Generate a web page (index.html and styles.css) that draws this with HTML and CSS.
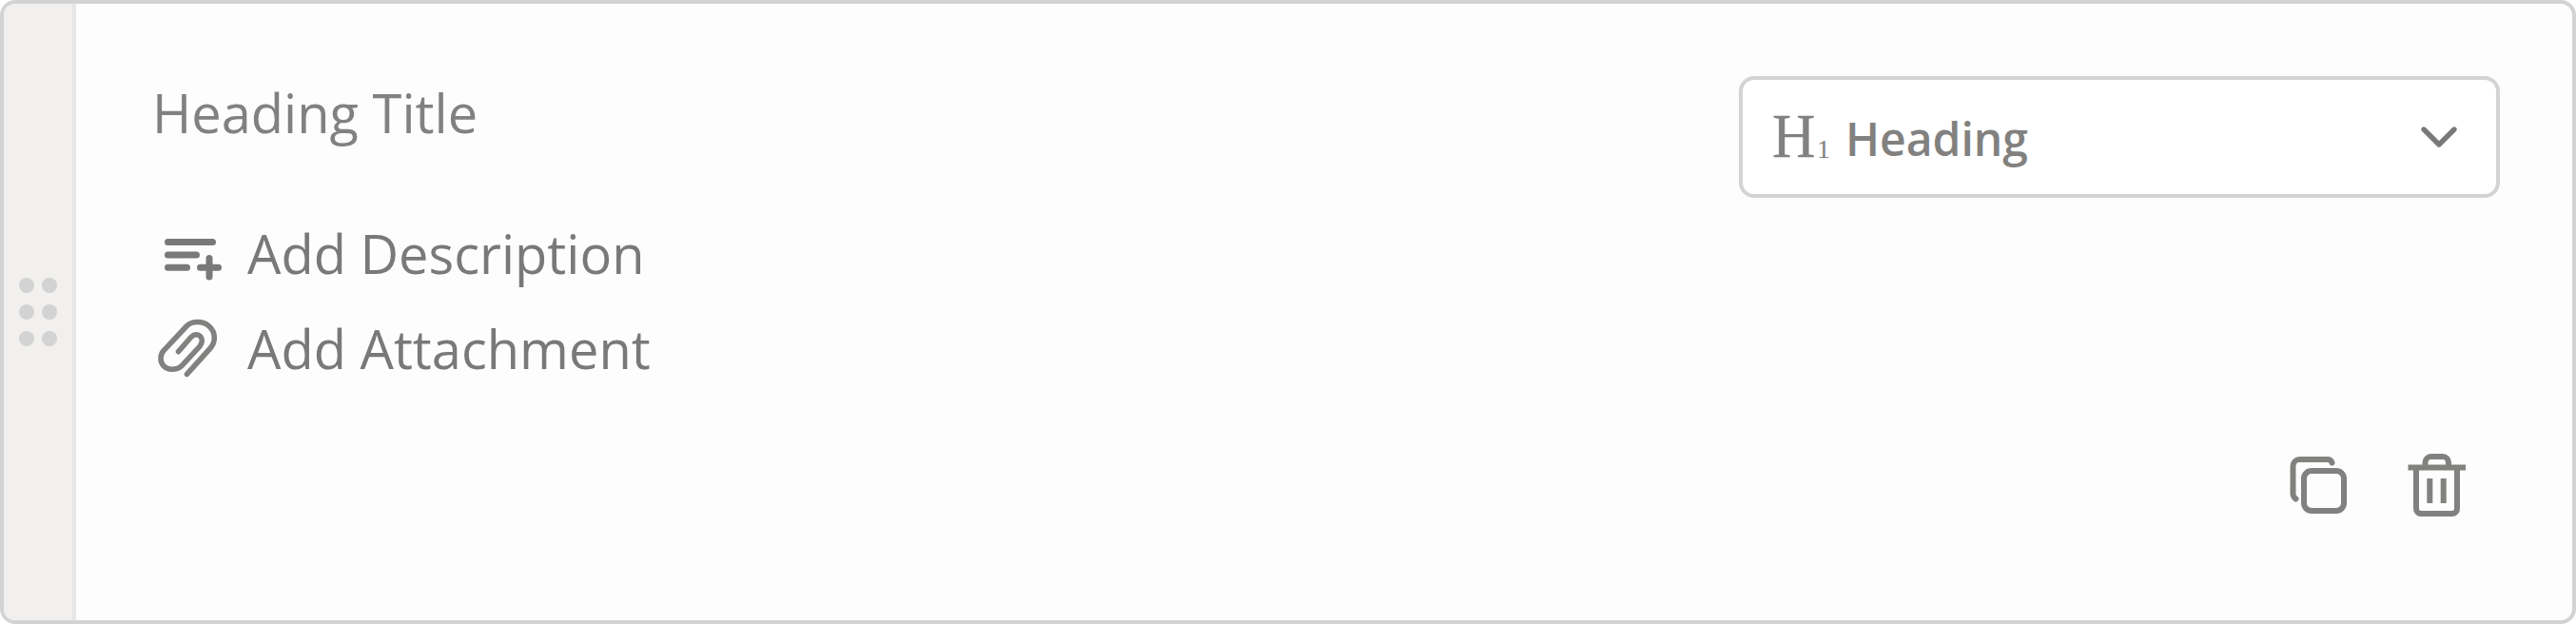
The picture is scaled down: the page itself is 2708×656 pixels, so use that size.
FILE: index.html
```html
<!DOCTYPE html>
<html>
	<head>
		<meta charset="utf-8">
		<title>Heading Title</title>
		<link rel="stylesheet" href="styles.css">
	</head>
	<body>

		<div class="card">

			<div class="handle">
				<div class="dots">
					<span></span><span></span>
					<span></span><span></span>
					<span></span><span></span>
				</div>
			</div>

			<div class="content">
				<div class="top">
					<div class="left">
						<div class="title">Heading Title</div>

						<div class="option">
							<svg class="optionIcon" width="80" height="80" viewBox="0 0 80 80">
								<path d="M16.5 27.5H63.5M16.5 41H46.5M16.5 54.300H36.5M50.5 54.300H69.5M60 44.500V64" stroke="#797979" stroke-width="7" />
							</svg>
							<span>Add Description</span>
						</div>

						<div class="option">
							<svg class="optionIcon" width="80" height="80" viewBox="0 0 80 80">
								<path d="M27.5 42.7L40.3 28C42 26 44.2 24.7 46.5 24.7C50 24.7 52.3 27.8 52.3 31.5C52.2 33.6 51.3 35.5 50 37.1L31 57.600C28.2 60.400 24.5 61.300 20.7 61.300C14 61.300 9 56.500 9 49.700C9 46.500 10 44 12 41.700L36.500 15.500C39.500 12.500 43.500 11.500 47.700 11.500C57.500 11.500 65.300 18.500 65.300 28C65.300 32.500 63.500 36.500 60.700 39.500L36.500 66.300" stroke="#82817f" stroke-width="5.600" />
							</svg>
							<span>Add Attachment</span>
						</div>
					</div>

					<div class="select">
						<svg class="typeIcon" width="72" height="80" viewBox="-4 0 72 80">
							<text class="typeLetter" x="-1" y="61" font-size="65" textLength="45.5" lengthAdjust="spacingAndGlyphs">H</text>
							<text x="46" y="62" font-size="28">1</text>
						</svg>
						<span class="selectText">Heading</span>
						<svg class="chevron" width="64" height="64" viewBox="0 0 24 24">
							<path d="m6 9 6 6 6-6" stroke="#797979" stroke-width="2" />
						</svg>
					</div>
				</div>

				<div class="actions">
					<svg width="72" height="72" viewBox="0 0 72 72">
						<rect x="21" y="21" width="42" height="42" rx="8" />
						<path d="M50.500 12.500C50 10.500 48 9 45.500 9H16.500C12.500 9 9.500 12 9.500 16V45C9.500 47.500 10.500 49 12.500 50.500" />
					</svg>
					<svg width="72" height="72" viewBox="0 0 72 72">
						<path class="square" d="M5.500 17.500H66M14 19V60.500C14 63.500 16 66 19.500 66H51.500C55 66 57 63.500 57 60.500V19M23.500 17V12.500C23.500 9 26 6 29.500 6H42C45.500 6 48 9 48 12.500V17M28.300 29V55M42.700 29V55" />
					</svg>
				</div>
			</div>

		</div>

	</body>
</html>
```

FILE: styles.css
```css
body {
	margin: 0;
	font-family: "Open Sans", sans-serif;
	background-color: white;
}
* {
	box-sizing: border-box;
}
svg {
	display: block;
	flex: none;
	fill: none;
	stroke-linecap: round;
	stroke-linejoin: round;
}

.card {
	display: flex;
	height: 656px;
	border: 4px solid #d3d3d3;
	border-radius: 16px;
	background-color: #fdfdfd;
	overflow: hidden;
}

.handle {
	display: flex;
	align-items: center;
	justify-content: center;
	width: 76px;
	background-color: #f1f0ee;
	border-right: 4px solid #e8e7e5;
}
.dots {
	display: grid;
	grid-template-columns: 16px 16px;
	gap: 12px 8px;
}
.dots span {
	height: 16px;
	border-radius: 50%;
	background-color: #d3d3d3;
}

.content {
	flex: 1;
	display: flex;
	flex-direction: column;
	justify-content: space-between;
	padding: 76px 76px 106px 80px;
}
.top {
	display: flex;
	justify-content: space-between;
	align-items: flex-start;
}

.title {
	height: 96px;
	margin-bottom: 41px;
	line-height: 76px;
	font-size: 56px;
	color: #82817f;
}
.option {
	display: flex;
	align-items: center;
	gap: 20px;
	height: 100px;
	font-size: 56px;
	line-height: 80px;
	color: #797979;
}
.option span {
	padding-bottom: 2px;
}

.select {
	display: flex;
	align-items: center;
	width: 800px;
	height: 128px;
	padding: 0 28px;
	border: 4px solid #d3d3d3;
	border-radius: 16px;
	background-color: white;
}
.typeIcon {
	fill: #82817f;
	font-family: "Liberation Serif", serif;
}
.typeLetter {
	stroke: #82817f;
	stroke-width: 0.3;
}
.selectText {
	margin-left: 8px;
	padding-top: 2px;
	font-size: 48px;
	font-weight: 600;
	color: #82817f;
}
.chevron {
	margin-left: auto;
}

.actions {
	display: flex;
	justify-content: flex-end;
	gap: 53px;
	padding-right: 30px;
}
.actions svg {
	stroke: #82817f;
	stroke-width: 6;
}
.actions .square {
	stroke-linecap: butt;
}
```
